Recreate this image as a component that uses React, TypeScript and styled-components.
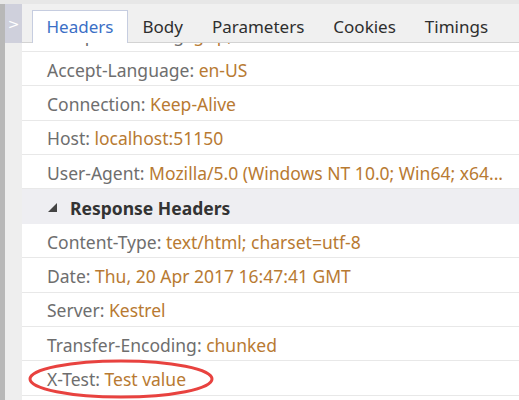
import React from "react";
import styled, { createGlobalStyle } from "styled-components";

const Global = createGlobalStyle`
  html, body { margin: 0; padding: 0; background: #ffffff; }
  body { font-family: "Noto Sans", "Open Sans", sans-serif; }
`;

const Page = styled.div`
  width: 519px;
  height: 400px;
  display: flex;
  flex-direction: column;
  background: #e9e9e9;
  overflow: hidden;
  position: relative;
`;

const TopStrip = styled.div`
  height: 4px;
  flex: none;
  background: #e7e7e7;
`;

const Body = styled.div`
  flex: 1;
  display: flex;
  min-height: 0;
`;

const Side = styled.div`
  width: 17px;
  flex: none;
  border-left: 5px solid #b8b8b8;
  background: #eeeeee;
  display: flex;
  flex-direction: column;
`;

const Toggle = styled.div`
  height: 39px;
  background: #cfd0dc;
  color: #ffffff;
  font-family: "DejaVu Sans", sans-serif;
  font-size: 14px;
  display: flex;
  align-items: center;
  justify-content: center;
  box-sizing: border-box;
`;

const Main = styled.div`
  flex: 1;
  display: flex;
  flex-direction: column;
  min-width: 0;
  background: #ffffff;
`;

const TabBar = styled.div`
  height: 39px;
  flex: none;
  box-sizing: border-box;
  background: #f0f0f0;
  border-bottom: 1px solid #d3d3d3;
  display: flex;
  align-items: flex-end;
  padding-left: 10px;
  position: relative;
  z-index: 1;
`;

const Tab = styled.div<{ $active?: boolean }>`
  height: ${(p) => (p.$active ? "33px" : "32px")};
  margin-bottom: ${(p) => (p.$active ? "-1px" : "0")};
  box-sizing: border-box;
  padding: 0 13.5px 1px;
  display: flex;
  align-items: center;
  font-size: 17px;
  color: ${(p) => (p.$active ? "#3b6fc6" : "#2e2e2e")};
  background: ${(p) => (p.$active ? "#ffffff" : "transparent")};
  border: 1px solid ${(p) => (p.$active ? "#c6cde0" : "transparent")};
  border-bottom: none;
  white-space: nowrap;
`;

const List = styled.div`
  flex: 1;
  overflow: hidden;
  display: flex;
  flex-direction: column;
`;

const Row = styled.div<{ $first?: boolean }>`
  height: 34.3px;
  flex: none;
  box-sizing: border-box;
  border-bottom: 1px solid #e8e8e8;
  padding: 2px 0 0 25px;
  display: flex;
  align-items: center;
  font-size: 17.5px;
  white-space: nowrap;
  overflow: hidden;
  margin-top: ${(p) => (p.$first ? "-25.3px" : "0")};
`;

const Name = styled.span`
  color: #6e6e6e;
`;

const Value = styled.span`
  color: #b87a32;
`;

const Section = styled.div`
  height: 35px;
  flex: none;
  box-sizing: border-box;
  background: #eeeef2;
  display: flex;
  align-items: center;
  padding: 2px 0 0 26px;
  gap: 13px;
  font-size: 17.5px;
  font-weight: bold;
  color: #333333;
`;

const Ring = styled.svg`
  position: absolute;
  left: 0;
  top: 0;
  overflow: visible;
  pointer-events: none;
`;

type H = [string, string];

const request: H[] = [
  ["Accept-Encoding", "gzip, deflate"],
  ["Accept-Language", "en-US"],
  ["Connection", "Keep-Alive"],
  ["Host", "localhost:51150"],
  ["User-Agent", "Mozilla/5.0 (Windows NT 10.0; Win64; x64..."],
];

const response: H[] = [
  ["Content-Type", "text/html; charset=utf-8"],
  ["Date", "Thu, 20 Apr 2017 16:47:41 GMT"],
  ["Server", "Kestrel"],
  ["Transfer-Encoding", "chunked"],
  ["X-Test", "Test value"],
];

export default function App() {
  return (
    <>
      <Global />
      <Page>
        <TopStrip />
        <Body>
          <Side>
            <Toggle>&gt;</Toggle>
          </Side>
          <Main>
            <TabBar>
              <Tab $active>Headers</Tab>
              <Tab>Body</Tab>
              <Tab>Parameters</Tab>
              <Tab>Cookies</Tab>
              <Tab>Timings</Tab>
            </TabBar>
            <List>
              {request.map(([n, v], i) => (
                <Row key={n} $first={i === 0}>
                  <Name>{n}:&nbsp;</Name>
                  <Value>{v}</Value>
                </Row>
              ))}
              <Section>
                <svg width="9" height="9" viewBox="0 0 9 9">
                  <polygon points="9,0 9,9 0,9" fill="#444444" />
                </svg>
                Response Headers
              </Section>
              {response.map(([n, v]) => (
                <Row key={n}>
                  <Name>{n}:&nbsp;</Name>
                  <Value>{v}</Value>
                </Row>
              ))}
              <Row />
            </List>
          </Main>
        </Body>
        <Ring width="519" height="400">
          <ellipse cx="121" cy="379" rx="91" ry="18" fill="none" stroke="#e8423f" strokeWidth="3" />
        </Ring>
      </Page>
    </>
  );
}
